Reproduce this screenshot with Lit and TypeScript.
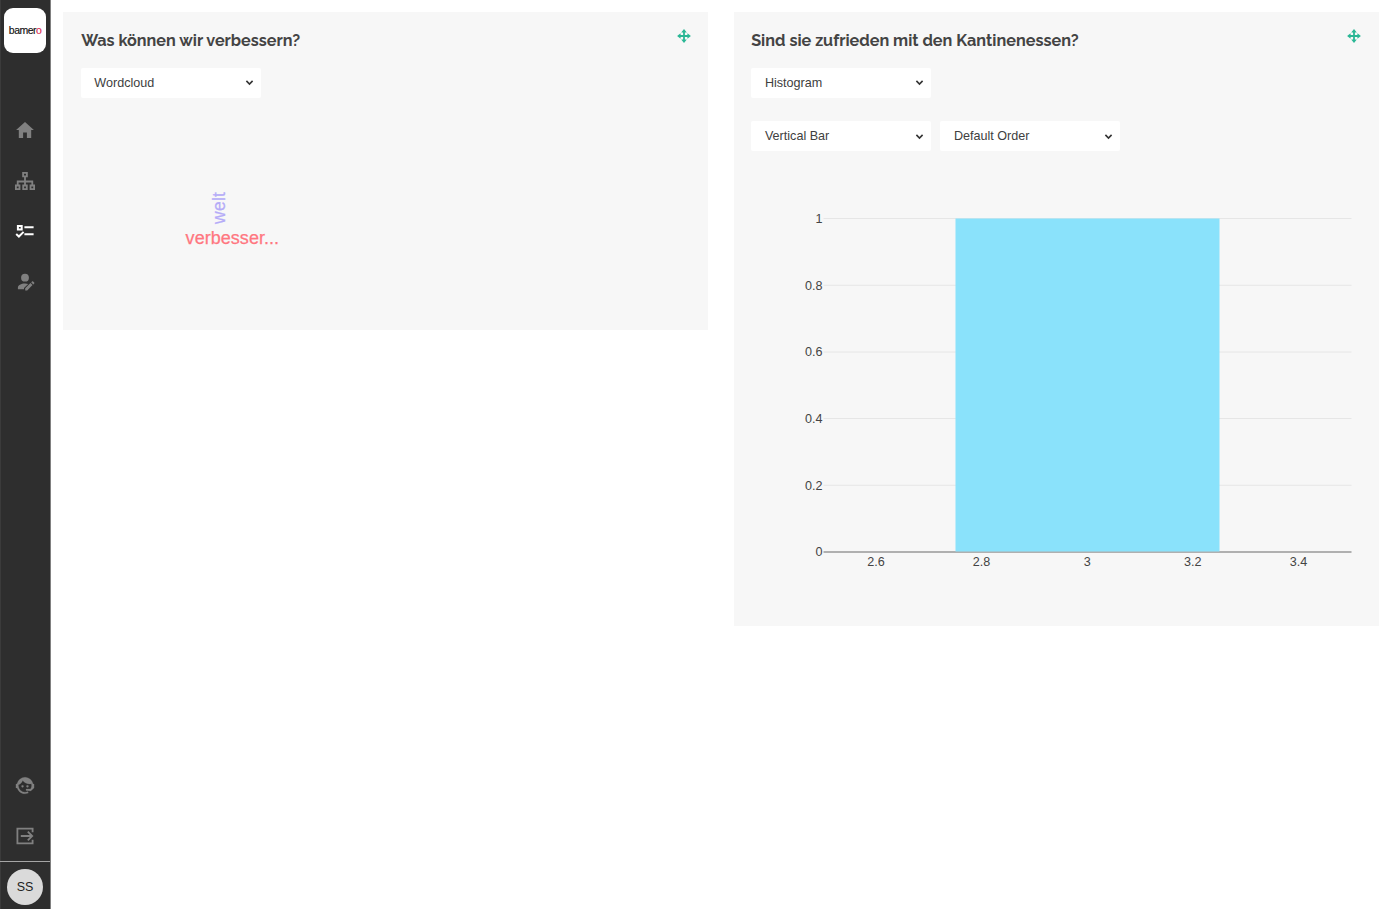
import { LitElement, html, svg, css } from "lit";
import { customElement, property } from "lit/decorators.js";

@customElement("side-nav")
class SideNav extends LitElement {
  static styles = css`
    :host { box-sizing: border-box; width: 51px; flex: none; display: flex; flex-direction: column; align-items: center; background: linear-gradient(90deg, #3b3b3b 1px, #2e2e2e 1px); border-right: 1px solid #808080; font-family: "Liberation Sans", Arial, sans-serif; }
    .logo { width: 42px; height: 45px; margin-top: 8px; border-radius: 9px; background: #fff; flex: none; }
    .links { display: flex; flex-direction: column; gap: 26.7px; margin-top: 65px; }
    .bottom { display: flex; flex-direction: column; gap: 26px; margin-top: auto; margin-bottom: 13px; }
    .icon { display: block; width: 24px; height: 24px; color: #808080; }
    .active { color: #fff; }
    .user { align-self: stretch; height: 48px; border-top: 1px solid #a5a5a5; display: flex; align-items: center; justify-content: center; padding-top: 1px; box-sizing: border-box; }
    .avatar { width: 36px; height: 36px; margin-top: 2px; border-radius: 50%; background: #dadada; color: #222; font-size: 12.5px; display: flex; align-items: center; justify-content: center; }
    svg { display: block; }
  `;
  render() {
    return html`
      <svg class="logo" viewBox="0 0 42 45"><text x="4.8" y="26.4" font-size="10.6" textLength="32.6" lengthAdjust="spacingAndGlyphs" letter-spacing="-0.5" font-family="Liberation Sans, sans-serif" fill="#111" stroke="#111" stroke-width=".15">bamer<tspan fill="#dc2850" stroke="#dc2850">o</tspan></text></svg>
      <div class="links">
        <svg class="icon" viewBox="0 0 24 24"><path fill="currentColor" d="M12 4.1 20.9 12.1H18.2V20H13.9V14.6H10.1V20H5.8V12.1H3.1Z"/></svg>
        <svg class="icon" viewBox="0 0 24 24" fill="none" stroke="currentColor" stroke-width="1.8"><path d="M10.1 3.9h3.8v3.5h-3.8zM2.9 16.5h3.6v3.6H2.9zM10.2 16.5h3.6v3.6h-3.6zM17.5 16.5h3.6v3.6h-3.6zM12 7.7v8.8M4.7 16.5v-4h14.6v4"/></svg>
        <svg class="icon active" viewBox="0 0 24 24" fill="none" stroke="currentColor" stroke-width="2"><path d="M4.9 6.9h3.8v3.6H4.9zM11.4 8.3h9.2M11.4 15.3h9.2M3.2 15l2.7 2.5 4.7-4.6"/></svg>
        <svg class="icon" viewBox="0 0 24 24" fill="currentColor"><circle cx="12" cy="7.7" r="3.9"/><path d="M4.9 19.3v-1.6c0-2.6 3.2-4.3 7.1-4.3 1.2 0 2.3.2 3.2.5L11 18.1v1.2zM12.2 20.4v-2.1l5.3-5.3 2 2-5.3 5.4zM18.2 12.3l.9-.9c.3-.3.7-.3 1 0l1.1 1.1c.3.3.3.7 0 1l-.9.9z"/></svg>
      </div>
      <div class="bottom">
        <svg class="icon" viewBox="-1.2 -.7 26.4 26.4" fill="currentColor" stroke="currentColor" stroke-width=".2"><path d="M18.72 14.76c.35-.85.54-1.76.54-2.76 0-.72-.11-1.41-.3-2.05-.65.15-1.33.23-2.04.23-3.06 0-5.77-1.51-7.42-3.84-.89 2.16-2.59 3.92-4.73 4.88-.04.25-.04.52-.04.78A7.27 7.27 0 0 0 12 19.27c1.05 0 2.06-.23 2.97-.64l.81 1.63c-1.64.55-2.91.82-3.78.82-2.42 0-4.73-.95-6.43-2.66a9.1 9.1 0 0 1-2.24-3.69H2v-4.55h1.09A9.09 9.09 0 0 1 12 2.92c2.4 0 4.71.95 6.42 2.66a9.1 9.1 0 0 1 2.47 4.6H22v4.55h-.06L18.38 18l-5.3-.6v-1.67h4.83z"/><circle cx="9.27" cy="12.91" r="1.2"/><circle cx="14.72" cy="12.91" r="1.2"/></svg>
        <svg class="icon" viewBox="0 0 24 24" fill="none" stroke="currentColor" stroke-width="1.8"><path d="M19.6 8.2V4.6H4.4v14.8h15.2v-3.6M7.8 12h11.4M14.8 7.6l4.4 4.4-4.4 4.4"/></svg>
      </div>
      <div class="user"><div class="avatar">SS</div></div>
    `;
  }
}

@customElement("select-box")
class SelectBox extends LitElement {
  @property() label = "";
  static styles = css`
    :host { box-sizing: border-box; width: 180px; height: 30px; padding: 0 7px 0 13.5px; display: flex; align-items: center; justify-content: space-between; background: #fff; border-radius: 2px; color: #404040; font: 12.6px "Liberation Sans", Arial, sans-serif; }
    .arrow { width: 9px; height: 7px; display: block; }
  `;
  render() {
    return html`<span>${this.label}</span><svg class="arrow" viewBox="0 0 9 7"><path d="M1.4 1.9 4.5 5 7.6 1.9" fill="none" stroke="#333" stroke-width="1.6"/></svg>`;
  }
}

@customElement("question-card")
class QuestionCard extends LitElement {
  @property() heading = "";
  static styles = css`
    :host { box-sizing: border-box; width: 645.3px; flex: none; background: #f7f7f7; padding: 17px 17.5px 0 17.8px; display: block; }
    .head { display: flex; justify-content: space-between; height: 38.5px; }
    .title { display: block; width: 360px; height: 24px; }
    .move { display: block; width: 14px; height: 14px; }
  `;
  render() {
    const width = this.heading.startsWith("Was") ? 219 : 327.5;
    return html`
      <div class="head">
        <svg class="title" viewBox="0 0 360 24"><text x="0.2" y="16.5" font-family="Raleway, Lato, sans-serif" font-weight="700" font-size="16.7" fill="#444" textLength=${width} lengthAdjust="spacingAndGlyphs">${this.heading}</text></svg>
        <svg class="move" viewBox="0 0 14 14"><path d="M7 2v10M2 7h10" stroke="#2ab795" stroke-width="1.8"/><path fill="#2ab795" d="M7 .1 9.8 3.6H4.2zM7 13.9 4.2 10.4h5.6zM.1 7l3.5-2.8v5.6zM13.9 7l-3.5 2.8V4.2z"/></svg>
      </div>
      <slot></slot>`;
  }
}

@customElement("app-root")
class AppRoot extends LitElement {
  static styles = css`
    :host { display: flex; width: 1380px; height: 909px; overflow: hidden; background: #fff; font-family: "Liberation Sans", Arial, sans-serif; }
    .board { display: flex; align-items: flex-start; gap: 25.3px; padding: 12px 0 0 12px; }
    .words { height: 318px; }
    .histogram { height: 614px; }
    .row { display: flex; gap: 9px; margin-top: 23.5px; }
    .cloud { display: block; width: 260px; height: 150px; margin-top: 42px; }
    .chart { display: block; width: 609px; height: 400px; margin-top: 38.5px; }
  `;
  render() {
    const yTicks = [[1, 28.5], [0.8, 95.3], [0.6, 162], [0.4, 228.5], [0.2, 295.3], [0, 362]];
    const xTicks = [[2.6, 124.9], [2.8, 230.6], [3, 336.2], [3.2, 441.8], [3.4, 547.4]];
    return html`
      <side-nav></side-nav>
      <main class="board">
        <question-card class="words" heading="Was können wir verbessern?">
          <select-box label="Wordcloud"></select-box>
          <svg class="cloud" viewBox="0 0 260 150" font-family="Liberation Sans, Arial, sans-serif">
            <text transform="translate(143.6 84) rotate(-90)" font-size="17.5" fill="#b5acf8" stroke="#b5acf8" stroke-width=".25" textLength="32">welt</text>
            <text x="104.6" y="104.4" font-size="18" fill="#ff7680" stroke="#ff7680" stroke-width=".25" textLength="93.5">verbesser...</text>
          </svg>
        </question-card>
        <question-card class="histogram" heading="Sind sie zufrieden mit den Kantinenessen?">
          <select-box label="Histogram"></select-box>
          <div class="row"><select-box label="Vertical Bar"></select-box><select-box label="Default Order"></select-box></div>
          <svg class="chart" viewBox="0 0 609 400" font-family="Liberation Sans, Arial, sans-serif" font-size="12.6" fill="#444">
            ${yTicks.map(([v, y]) => svg`<path d="M72.5 ${y}H600.5" stroke=${v ? "#e6e6e6" : "#999"} stroke-width=${v ? 1 : 1.6}/><text x="71.4" y=${y + 4.4} text-anchor="end">${v}</text>`)}
            <rect x="204.5" y="28.5" width="264" height="333" fill="#8ae2fb"/>
            ${xTicks.map(([v, x]) => svg`<text x=${x} y="375.6" text-anchor="middle">${v}</text>`)}
          </svg>
        </question-card>
      </main>`;
  }
}
